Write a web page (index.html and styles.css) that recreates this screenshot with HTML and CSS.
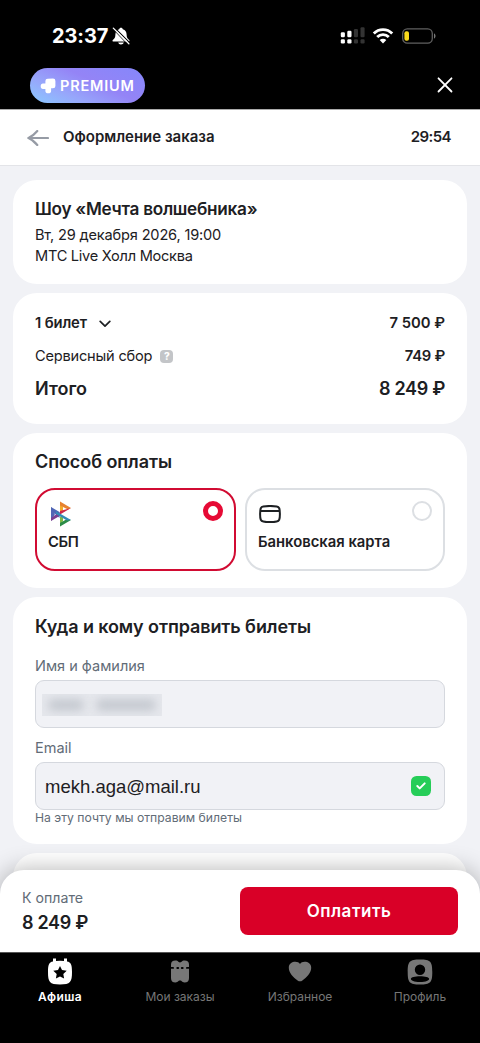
FILE: index.html
```html
<!DOCTYPE html>
<html lang="ru">
<head>
<meta charset="utf-8">
<meta name="viewport" content="width=device-width, initial-scale=1">
<title>Оформление заказа</title>
<link rel="stylesheet" href="styles.css">
</head>
<body>
<div class="statusbar">
  <div class="clock"><span class="time">23:37</span>
    <svg class="bell" width="18" height="18" viewBox="0 0 18 18"><path d="M9 .8c-1 0-1.700.7-1.800 1.500C4.600 3.100 3.400 5 3.400 7.500c0 3-1 4.200-2.600 5.500-.6.600-.3 1.600.7 1.600h15c1 0 1.300-1 .7-1.600-1.600-1.300-2.600-2.500-2.600-5.500 0-2.500-1.200-4.400-3.800-5.200C10.700 1.500 10 .8 9 .8zM6.200 15.400h5.600c-.3 1.300-1.400 2-2.800 2s-2.500-.7-2.800-2z" fill="#fff"/><path d="M2.700.9 18 16.200" stroke="#000" stroke-width="1.200"/><path d="M.6 1.600 15.400 17.200" stroke="#000" stroke-width=".9"/><path d="M1.300 1.100 16.900 16.700" stroke="#fff" stroke-width="1.300" stroke-linecap="round"/></svg>
  </div>
  <div class="signals">
    <svg width="26" height="17" viewBox="0 0 26 17"><g fill="#fff"><rect x=".8" y="5.300" width="4.100" height="5" rx="1.200"/><rect x="7.300" y="3.800" width="4.200" height="6.500" rx="1.200"/><rect x=".8" y="12.200" width="4.100" height="4.200" rx="1.200"/><rect x="7.300" y="12.200" width="4.200" height="4.200" rx="1.200"/></g><g fill="#333"><rect x="13.900" y="2" width="4.100" height="8.300" rx="1.200"/><rect x="20.500" y=".2" width="4.100" height="10.100" rx="1.200"/><rect x="13.900" y="12.200" width="4.100" height="4.200" rx="1.200"/><rect x="20.500" y="12.200" width="4.100" height="4.200" rx="1.200"/></g></svg>
    <svg class="wifi" width="22" height="16" viewBox="0 0 22 16"><g fill="none" stroke="#fff" stroke-width="2.900"><path d="M1.800 5.400a13 13 0 0 1 18.400 0"/><path d="M5.200 9a8.300 8.300 0 0 1 11.600 0"/></g><path d="M11 15.600 7.700 12.100a4.700 4.700 0 0 1 6.600 0z" fill="#fff"/></svg>
    <svg class="battery" width="34" height="16" viewBox="0 0 34 16"><rect x=".7" y=".8" width="29.600" height="14.400" rx="4.600" fill="none" stroke="#606060" stroke-width="1.300"/><path d="M32 5.500c2 .6 2 4.400 0 5z" fill="#777"/><rect x="2.400" y="3.300" width="4.600" height="9.400" rx="1.900" fill="#fbdb1c"/></svg>
  </div>
</div>
<div class="appbar">
  <div class="premium">
    <svg width="16" height="16" viewBox="0 0 16 16"><path d="M5.400 3.100Q5.400.8 7.700.8L13 .6Q15.400.6 15.400 3v5Q15.400 10.300 13 10.300h-1.900v2.600Q11.100 15.200 8.300 15.300 5.400 15.200 5.400 12.900v-1.900H3Q.7 11 .7 8.300T3 5.500h2.400z" fill="#fff"/></svg>
    <span class="premium-text">PREMIUM</span>
  </div>
  <svg class="close" width="16" height="16" viewBox="0 0 16 16"><path d="m1.500 1.300 13 13.200m0-13.200-13 13.200" stroke="#fff" stroke-width="1.800" stroke-linecap="round"/></svg>
</div>
<header class="header">
  <svg class="back" width="22" height="16" viewBox="0 0 22 16"><path d="M21 8H1.400M10.300 1C7.800 4 5.300 6.500 1.400 8c3.900 1.500 6.400 4 8.900 7" fill="none" stroke="#969ba5" stroke-width="2.200" stroke-linecap="round" stroke-linejoin="round"/></svg>
  <span class="header-title">Оформление заказа</span>
  <span class="timer">29:54</span>
</header>
<main class="content">
  <section class="card event">
    <h2 class="title event-title">Шоу «Мечта волшебника»</h2>
    <div class="body-text date">Вт, 29 декабря 2026, 19:00</div>
    <div class="body-text venue">МТС Live Холл Москва</div>
  </section>
  <section class="card summary">
    <div class="row"><span class="medium tickets">1 билет</span><svg class="chevron" width="12" height="8" viewBox="0 0 12 8"><path d="m1.200 1.400 4.800 4.700 4.800-4.700" fill="none" stroke="#1d2023" stroke-width="1.700" stroke-linecap="round" stroke-linejoin="round"/></svg><span class="medium price">7 500 ₽</span></div>
    <div class="row"><span class="body-text fee">Сервисный сбор</span><span class="help">?</span><span class="medium price small-price">749 ₽</span></div>
    <div class="row total"><span class="title itogo">Итого</span><span class="title price sum">8 249 ₽</span></div>
  </section>
  <section class="card payment">
    <h2 class="title pay-title">Способ оплаты</h2>
    <div class="methods">
      <div class="method selected">
        <div class="method-top">
          <svg class="sbp" width="22" height="26" viewBox="0 0 22 26"><path d="M1 6v14l4-6.900z" fill="#5566b5"/><path d="M1 6v3l8.500 8V11z" fill="#4f65b4"/><path d="M1 20v-3l8.500-6v4z" fill="#7c3f91"/><path d="M10 .5v11l3-2V6z" fill="#f5aa29"/><path d="M10 .5 21 7l-3 1.500-8-4z" fill="#e7822f"/><path d="m21 7-11 6.500V10z" fill="#cf2649"/><path d="M10 25.500v-10l3 1V20z" fill="#7fb944"/><path d="M10 25.500 21 19l-4-1-7 4z" fill="#2b8c47"/><path d="M6 10.300 21 19l-4 .5L6 13z" fill="#348bb7"/></svg>
          <span class="radio on"></span>
        </div>
        <span class="medium sbp-label">СБП</span>
      </div>
      <div class="method">
        <div class="method-top">
          <svg class="bankcard" width="22" height="18" viewBox="0 0 22 18"><path d="M1.100 9c0-6 .8-7 3.200-7.400C8 .9 14 .9 17.700 1.600c2.400.4 3.200 1.400 3.200 7.400s-.8 7-3.200 7.400c-3.700.7-9.700.7-13.400 0C1.900 16 1.100 15 1.100 9zM1.500 6h19" fill="none" stroke="#1d2023" stroke-width="2"/></svg>
          <span class="radio"></span>
        </div>
        <span class="medium card-label">Банковская карта</span>
      </div>
    </div>
  </section>
  <section class="card recipient">
    <h2 class="title recipient-title">Куда и кому отправить билеты</h2>
    <label class="label name-label">Имя и фамилия</label>
    <div class="field"><span class="mask"><i class="blot first"></i><i class="blot second"></i></span></div>
    <label class="label email-label">Email</label>
    <div class="field"><span class="email">mekh.aga@mail.ru</span><svg class="check" width="20" height="20" viewBox="0 0 20 20"><rect width="20" height="20" rx="5.500" fill="#26cd58"/><path d="m6.300 10 2.400 2.400 5-5" fill="none" stroke="#fff" stroke-width="2" stroke-linecap="round" stroke-linejoin="round"/></svg></div>
    <div class="hint">На эту почту мы отправим билеты</div>
  </section>
  <section class="card next"></section>
</main>
<div class="paybar">
  <div class="due"><span class="label due-label">К оплате</span><span class="title due-sum">8 249 ₽</span></div>
  <div class="pay-button"><span class="pay-text">Оплатить</span></div>
</div>
<nav class="tabs">
  <div class="tab active"><svg width="26" height="28" viewBox="0 0 26 28"><path fill-rule="evenodd" d="M6 1.500h3V4q4-.5 8 0V1.500h3v3c4.200.7 5 3.500 5 10.500 0 10-1.500 12.500-12 12.500S1 25 1 15C1 8 1.800 5.200 6 4.500zM13 9l-2 4.100-4.700.7 3.400 3.200-.8 4.600 4.100-2.200 4.100 2.200-.8-4.600 3.400-3.200-4.700-.7z" fill="#fff"/></svg><span class="tab-text t1">Афиша</span></div>
  <div class="tab"><svg width="26" height="28" viewBox="0 0 26 28"><path d="M4 10V7.500Q4 3.500 8.500 3.500c2.800 0 2.500 1.900 4.500 1.900s1.700-1.900 4.500-1.900Q22 3.500 22 7.500V10h-2.100q-.9 0-.9.900t.9.900H22V21q0 4.500-4.500 4.500c-2.800 0-2.500-1.900-4.500-1.900s-1.700 1.900-4.500 1.900Q4 25.500 4 21v-9.200h2.100q.9 0 .9-.9T6.100 10z" fill="#777"/><g stroke="#000" stroke-width="1.900" stroke-linecap="round"><path d="M10.300 11h.9M14.800 11h.9"/></g></svg><span class="tab-text t2">Мои заказы</span></div>
  <div class="tab"><svg width="26" height="28" viewBox="0 0 26 28"><path d="M13 7c2-3.500 11.200-3 11.200 3.800 0 5.400-4.700 9.700-8.800 12.700q-2.400 1.700-4.800 0C6.500 20.500 1.800 16.200 1.800 10.800 1.800 4 11 3.500 13 7z" fill="#777"/></svg><span class="tab-text t3">Избранное</span></div>
  <div class="tab"><svg width="26" height="28" viewBox="0 0 26 28"><path fill-rule="evenodd" d="M13 2.500C23.500 2.500 25.300 4.500 25.300 15S23.500 27.500 13 27.500.7 25.500.7 15 2.500 2.500 13 2.500zM13 7.500a5.200 5.200 0 1 0 0 10.400 5.200 5.200 0 0 0 0-10.400zM13 19.300c-5.200 0-9 1-9.100 2.400C3.800 23.500 7 25 13 25s9.200-1.500 9.100-3.300c-.1-1.400-3.900-2.400-9.100-2.400z" fill="#777"/></svg><span class="tab-text t4">Профиль</span></div>
</nav>
</body>
</html>
```
FILE: styles.css
```css
* { box-sizing: border-box; }
body {
  margin: 0;
  width: 480px;
  height: 1043px;
  overflow: hidden;
  display: flex;
  flex-direction: column;
  background: #000;
  color: #1d2023;
  font-family: Inter, "Liberation Sans", sans-serif;
  white-space: nowrap;
}
svg { display: block; flex: none; }
h2 { margin: 0; }

.statusbar { height: 68px; flex: none; display: flex; align-items: flex-start; justify-content: space-between; padding: 24px 44px 0 52px; color: #fff; }
.clock { display: flex; align-items: center; gap: 4px; }
.time { font: 700 20px/24px Inter, sans-serif; letter-spacing: -.1px; }
.signals { display: flex; align-items: center; padding-top: 3px; }
.wifi { margin-left: 6px; }
.battery { margin-left: 8px; }

.appbar { height: 41px; flex: none; display: flex; align-items: flex-start; justify-content: space-between; padding: 0 27px 0 30px; }
.premium { width: 115px; height: 35px; border-radius: 18px; padding-left: 10px; display: flex; align-items: center; gap: 4px; color: #fff; background: linear-gradient(25deg, #8bcaff 0%, #97a6fb 30%, #9484f6 58%, #8587fb 100%); }
.premium-text { font: 600 14.500px/20px Inter, sans-serif; letter-spacing: .8px; }
.close { margin-top: 9px; }

.header { height: 57px; flex: none; display: flex; align-items: center; padding: 0 29px 1px 27px; background: #fff; border-top: 1px solid #aaa; border-bottom: 1px solid #e3e4e8; }
.back { margin-top: 1px; }
.header-title { margin: -2px 0 0 14px; font-weight: 600; font-size: 15px; letter-spacing: -.02px; }
.timer { margin: -2px 0 0 auto; font-weight: 600; font-size: 15px; letter-spacing: -.6px; }

.content { flex: 1; min-height: 0; overflow: hidden; margin-bottom: -24px; padding: 14px 13px 0; display: flex; flex-direction: column; gap: 9px; background: #f1f2f6; }
.card { flex: none; background: #fff; border-radius: 24px; padding: 0 22px; }
.title { font-weight: 600; font-size: 18px; line-height: 24px; }
.body-text { font-size: 14.600px; line-height: 21px; }
.medium { font-weight: 600; font-size: 14.800px; line-height: 20px; }
.label { display: block; font-size: 14.500px; line-height: 20px; color: #626c77; }

.event { height: 104px; padding-top: 17px; }
.event-title { font-size: 17.200px; letter-spacing: -.28px; }
.date { margin-top: 4px; letter-spacing: -.18px; }
.venue { letter-spacing: -.27px; }
.summary { height: 131px; padding-top: 20px; }
.row { display: flex; align-items: center; height: 20px; margin-bottom: 13px; }
.tickets { letter-spacing: -.15px; }
.fee { margin-top: 1px; letter-spacing: -.2px; }
.price { margin-left: auto; }
.small-price { letter-spacing: -.25px; }
.sum, .due-sum { letter-spacing: -.3px; }
.chevron { margin-left: 12px; margin-top: 2px; }
.help { width: 13px; height: 13px; margin-left: 8px; border-radius: 4px; background: #c3c5c8; color: #fff; font: 800 10px/13px Inter, sans-serif; text-align: center; }
.payment { height: 155px; padding-top: 17px; }
.pay-title { letter-spacing: -.08px; }
.methods { display: grid; grid-template-columns: 201px 200px; gap: 9px; margin-top: 14px; }
.method { height: 83px; border: 2px solid #dcdfe3; border-radius: 20px; padding: 11px 11px; }
.method.selected { border-color: #d10b32; }
.method-top { display: flex; justify-content: space-between; align-items: flex-start; height: 31px; }
.sbp { margin-left: 2px; }
.bankcard { margin: 4px 0 0 1px; }
.radio { width: 20px; height: 20px; border: 2px solid #dcdfe3; border-radius: 50%; }
.radio.on { border: 5px solid #e60a35; }
.method .medium { display: block; }
.sbp-label { letter-spacing: -.3px; }

.recipient { height: 247px; padding-top: 18px; }
.recipient-title { letter-spacing: -.1px; }
.name-label { margin-top: 17px; }
.field { height: 48px; margin-top: 4px; border: 1px solid #d5d8de; border-radius: 9px; background: #f1f2f6; display: flex; align-items: center; justify-content: space-between; padding: 0 13px 0 9px; }
.email-label { margin-top: 10px; }
.email { margin-top: 2px; font: 18.500px/24px "Liberation Sans", Arial, sans-serif; }
.mask { display: flex; gap: 12px; width: 120px; height: 22px; margin: 2px 0 0 -3px; padding: 5px 6px; background: #e5e7ec; overflow: hidden; filter: blur(.7px); }
.blot { height: 12px; background: #c6cad1; border-radius: 6px; filter: blur(4px); }
.first { width: 36px; }
.second { width: 60px; }
.hint { font-size: 12.200px; line-height: 16px; color: #626c77; }
.next { height: 70px; }

.paybar { position: relative; height: 82px; flex: none; display: flex; align-items: flex-start; justify-content: space-between; padding: 18px 22px 0; background: #fff; border-radius: 24px 24px 0 0; box-shadow: 0 0 24px rgba(0, 0, 0, .3); }
.due { display: flex; flex-direction: column; }
.due-label { font-size: 14.200px; }
.due-sum { margin-top: 3px; }
.pay-button { width: 218px; height: 48px; margin-top: -1px; border-radius: 8px; display: flex; align-items: center; justify-content: center; background: #d90027; color: #fff; font-weight: 600; font-size: 17px; letter-spacing: .5px; padding-bottom: 1px; }

.tabs { position: relative; height: 91px; flex: none; display: grid; grid-template-columns: repeat(4, 1fr); border-top: 1px solid #555; background: #000; color: #777; }
.tab { display: flex; flex-direction: column; align-items: center; padding-top: 4px; }
.tab-text { margin-top: 3px; font-size: 12px; line-height: 17px; }
.active { color: #fff; }
.active .tab-text { font-weight: 600; letter-spacing: .4px; }
```
